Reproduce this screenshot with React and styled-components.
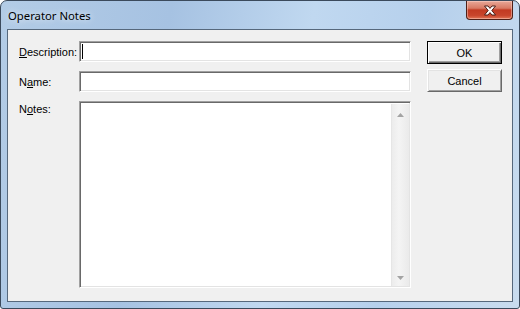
import React from "react"
import styled, { createGlobalStyle } from "styled-components"

const Global = createGlobalStyle`
  html, body {
    margin: 0;
    padding: 0;
    background: #ffffff;
  }
`

const Frame = styled.div`
  width: 520px;
  height: 309px;
  box-sizing: border-box;
  border: 1px solid #3b4a5c;
  border-radius: 7px 7px 3px 3px;
  background: linear-gradient(100deg, #b3cce6 0%, #a6c2e2 30%, #c0d8f0 55%, #b6d0ec 75%, #c9dcef 100%);
  display: flex;
  flex-direction: column;
  overflow: hidden;
`

const TitleBar = styled.div`
  height: 28px;
  display: flex;
  align-items: flex-start;
  justify-content: space-between;
  padding-left: 7px;
  font-family: "Noto Sans", "Open Sans", sans-serif;
  font-size: 11.3px;
  color: #000;
`

const Title = styled.span`
  margin-top: 7px;
  text-shadow: 0 0 6px rgba(255, 255, 255, 0.9);
`

const CloseButton = styled.div`
  width: 47px;
  height: 19px;
  margin-right: 6px;
  box-sizing: border-box;
  border: 1px solid #4e2018;
  border-top: none;
  border-radius: 0 0 4px 4px;
  background: linear-gradient(180deg, #e8a898 0%, #d87a64 40%, #c23a22 50%, #c8452c 80%, #e27556 100%);
  box-shadow: inset 0 0 0 1px rgba(255, 220, 210, 0.45);
  display: flex;
  align-items: center;
  justify-content: center;
`

const Client = styled.div`
  margin: 0 6px 6px 6px;
  flex: 1;
  border: 1px solid #56687c;
  background: #f0f0f0;
  display: flex;
  align-items: flex-start;
  padding: 11px 0 0 11px;
  gap: 16px;
  font-family: "Liberation Sans", Arial, sans-serif;
  font-size: 11px;
  color: #000;
`

const Form = styled.div`
  display: grid;
  grid-template-columns: 60px 332px;
  grid-template-rows: 21px 21px 187px;
  row-gap: 9px;
`

const Label = styled.label`
  display: flex;
  align-items: ${(p) => (p.$top ? "flex-start" : "center")};
  padding-top: ${(p) => (p.$top ? "2px" : "0")};
  white-space: nowrap;
  u {
    text-decoration: underline;
    text-underline-offset: 1px;
  }
`

const Sunken = styled.div`
  box-sizing: border-box;
  background: #ffffff;
  border-top: 1px solid #a0a0a0;
  border-left: 1px solid #a0a0a0;
  border-right: 1px solid #ffffff;
  border-bottom: 1px solid #ffffff;
  box-shadow: inset 1px 1px 0 #696969, inset -1px -1px 0 #e3e3e3;
  display: flex;
`

const Caret = styled.span`
  width: 1px;
  height: 15px;
  background: #000;
  margin: 2px 0 0 2px;
`

const NotesBody = styled.div`
  flex: 1;
`

const ScrollBar = styled.div`
  width: 17px;
  margin: 2px 1px 1px 0;
  background: linear-gradient(90deg, #ececec 0%, #f4f4f4 40%, #eaeaea 100%);
  border-left: 1px solid #e6e6e6;
  display: flex;
  flex-direction: column;
  justify-content: space-between;
  align-items: center;
  padding: 9px 0 6px;
`

const Arrow = styled.svg`
  display: block;
`

const Buttons = styled.div`
  display: flex;
  flex-direction: column;
  gap: 5px;
`

const Button = styled.button`
  width: 75px;
  height: 23px;
  box-sizing: border-box;
  font-family: "Liberation Sans", Arial, sans-serif;
  font-size: 11px;
  color: #000;
  background: #f0f0f0;
  border: 1px solid;
  border-top-color: ${(p) => (p.$default ? "#000" : "#ffffff")};
  border-left-color: ${(p) => (p.$default ? "#000" : "#ffffff")};
  border-right-color: ${(p) => (p.$default ? "#000" : "#696969")};
  border-bottom-color: ${(p) => (p.$default ? "#000" : "#696969")};
  box-shadow: ${(p) =>
    p.$default
      ? "inset 1px 1px 0 #fff, inset -1px -1px 0 #696969, inset -2px -2px 0 #a0a0a0"
      : "inset 1px 1px 0 #e3e3e3, inset -1px -1px 0 #a0a0a0"};
  padding: 0;
`

const App = () => {
  return (
    <>
      <Global />
      <Frame>
        <TitleBar>
          <Title>Operator Notes</Title>
          <CloseButton>
            <svg width="14" height="11" viewBox="0 0 14 11">
              <path
                d="M1.5 1 L5 1 L7 3.4 L9 1 L12.5 1 L8.8 5.5 L12.5 10 L9 10 L7 7.6 L5 10 L1.5 10 L5.2 5.5 Z"
                fill="#ffffff"
                stroke="#4a1e16"
                strokeWidth="1"
              />
            </svg>
          </CloseButton>
        </TitleBar>
        <Client>
          <Form>
            <Label>
              <span>
                <u>D</u>escription:
              </span>
            </Label>
            <Sunken>
              <Caret />
            </Sunken>
            <Label>
              <span>
                N<u>a</u>me:
              </span>
            </Label>
            <Sunken />
            <Label $top>
              <span>
                N<u>o</u>tes:
              </span>
            </Label>
            <Sunken>
              <NotesBody />
              <ScrollBar>
                <Arrow width="7" height="4" viewBox="0 0 7 4">
                  <path d="M3.5 0 L7 4 L0 4 Z" fill="#a3a3a3" />
                </Arrow>
                <Arrow width="7" height="4" viewBox="0 0 7 4">
                  <path d="M0 0 L7 0 L3.5 4 Z" fill="#a3a3a3" />
                </Arrow>
              </ScrollBar>
            </Sunken>
          </Form>
          <Buttons>
            <Button $default>OK</Button>
            <Button>Cancel</Button>
          </Buttons>
        </Client>
      </Frame>
    </>
  )
}

export default App
